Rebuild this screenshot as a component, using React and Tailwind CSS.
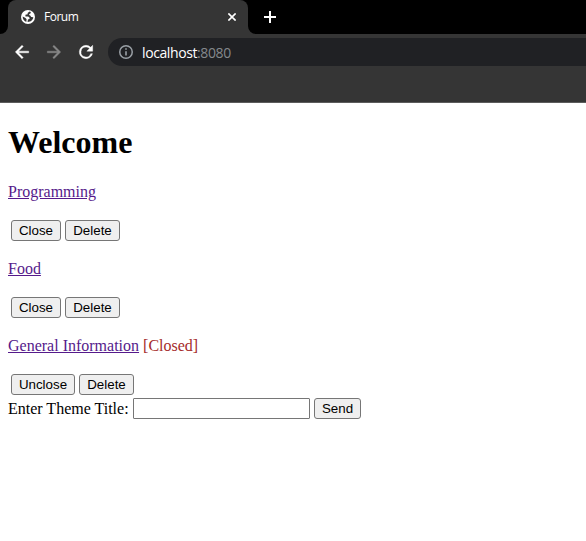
function Globe() {
  return (
    <svg className="block size-[14px]" viewBox="0 0 14 14">
      <circle cx="7" cy="7" r="7" fill="#fff" />
      <path
        d="M8.6 1.6 L6.6 3.1 L6.7 4.3 L4.4 4.8 L4.5 6.4 L7.2 6.5 L8.6 7.7 L8.5 9.1 L6.9 9.5 L6.6 12 C9.8 12.1 12.1 9.9 12.3 7.3 L10.2 6.9 L9.2 5.5 L8 5 L8.4 3.9 L9.7 3.3 L9.7 2.1 Z M1.7 6.6 L4.5 7.9 L5.6 9.3 L5.3 11.9 C3 11.2 1.5 9.2 1.7 6.6 Z"
        fill="#353535"
      />
    </svg>
  );
}

function ToolbarIcon({ d, className }) {
  return (
    <svg
      className={`block size-5 shrink-0 ${className}`}
      viewBox="0 0 24 24"
      fill="currentColor"
      stroke="currentColor"
      strokeWidth="0.5"
    >
      <path d={d} />
    </svg>
  );
}

const BACK = "M20 11H7.83l5.59-5.59L12 4l-8 8 8 8 1.41-1.41L7.83 13H20v-2z";
const FORWARD = "M12 4l-1.41 1.41L16.17 11H4v2h12.17l-5.58 5.59L12 20l8-8z";
const REFRESH =
  "M17.65 6.35A7.96 7.96 0 0 0 12 4a8 8 0 1 0 7.73 10h-2.08A6 6 0 1 1 12 6c1.66 0 3.14.69 4.22 1.78L13 11h7V4l-2.35 2.35z";

function Button({ className, children }) {
  return (
    <button
      className={`h-[21px] shrink-0 rounded-[3px] border border-[#767676] bg-[#efefef] font-['Liberation_Sans',Arial,sans-serif] text-[13.333px] leading-[19px] text-black ${className}`}
    >
      {children}
    </button>
  );
}

function Theme({ title, closed }) {
  return (
    <section>
      <p className="h-[18px] leading-[18px]">
        <a href="#" className="text-[#551a8b] underline">{title}</a>
        {closed && <span className="text-[#a52a2a]"> [Closed]</span>}
      </p>
      <div className="mt-[19px] ml-[3px] flex gap-1">
        <Button className={closed ? "w-16" : "w-[50px]"}>{closed ? "Unclose" : "Close"}</Button>
        <Button className="w-[55px]">Delete</Button>
      </div>
    </section>
  );
}

function Browser() {
  return (
    <header className="h-[103px] border-b border-[#5c5c5c] bg-[#353535] font-['Open_Sans','Noto_Sans',sans-serif] text-white">
      <div className="flex h-[34px] bg-black">
        <div className="w-2 bg-[#353535]">
          <div className="h-full rounded-br-lg bg-black" />
        </div>
        <div className="flex w-60 items-center rounded-t-lg bg-[#353535] pr-3 pl-[13px]">
          <Globe />
          <span className="ml-[9px] flex-1 text-[12px] tracking-[-0.5px]">Forum</span>
          <svg className="size-2" viewBox="0 0 8 8" stroke="currentColor" strokeWidth="1.6">
            <path d="M0.4 0.4 L7.6 7.6 M7.6 0.4 L0.4 7.6" />
          </svg>
        </div>
        <div className="flex-1 bg-[#353535]">
          <div className="flex h-full items-center rounded-bl-lg bg-black pl-4">
            <svg className="size-3" viewBox="0 0 12 12" stroke="currentColor" strokeWidth="2">
              <path d="M0 6 H12 M6 0 V12" />
            </svg>
          </div>
        </div>
      </div>
      <div className="flex h-9 items-center gap-3 pl-3">
        <ToolbarIcon d={BACK} className="text-white" />
        <ToolbarIcon d={FORWARD} className="text-[#888888]" />
        <ToolbarIcon d={REFRESH} className="text-white" />
        <div className="flex h-7 flex-1 items-center rounded-l-full bg-[#202124] pl-[11px]">
          <svg className="block size-[14px] text-[#9aa0a6]" viewBox="0 0 14 14" fill="none" stroke="currentColor">
            <circle cx="7" cy="7" r="6.25" strokeWidth="1.5" />
            <path d="M7 3.3 V4.8 M7 6.2 V10.6" strokeWidth="1.6" />
          </svg>
          <span className="ml-[9px] text-[14px] tracking-[-0.4px]">
            localhost<span className="text-[#85898d]">:8080</span>
          </span>
        </div>
      </div>
    </header>
  );
}

export default function App() {
  return (
    <div className="h-[541px] w-[586px] overflow-hidden bg-white">
      <Browser />
      <main className="px-2 pt-[21px] font-['Liberation_Serif','Times_New_Roman',serif] text-[16px] text-black">
        <h1 className="h-[37px] text-[32px] leading-[37px] font-bold">Welcome</h1>
        <div className="mt-[22px] flex flex-col gap-[19px]">
          <Theme title="Programming" />
          <Theme title="Food" />
          <Theme title="General Information" closed />
        </div>
        <form className="mt-[3px] flex h-[21px] items-center">
          <label htmlFor="title" className="w-[125px] leading-[18px] whitespace-nowrap">Enter Theme Title:</label>
          <input id="title" className="h-[21px] w-[177px] rounded-[1px] border border-[#767676] bg-white" />
          <Button className="ml-1 w-[47px]">Send</Button>
        </form>
      </main>
    </div>
  );
}
